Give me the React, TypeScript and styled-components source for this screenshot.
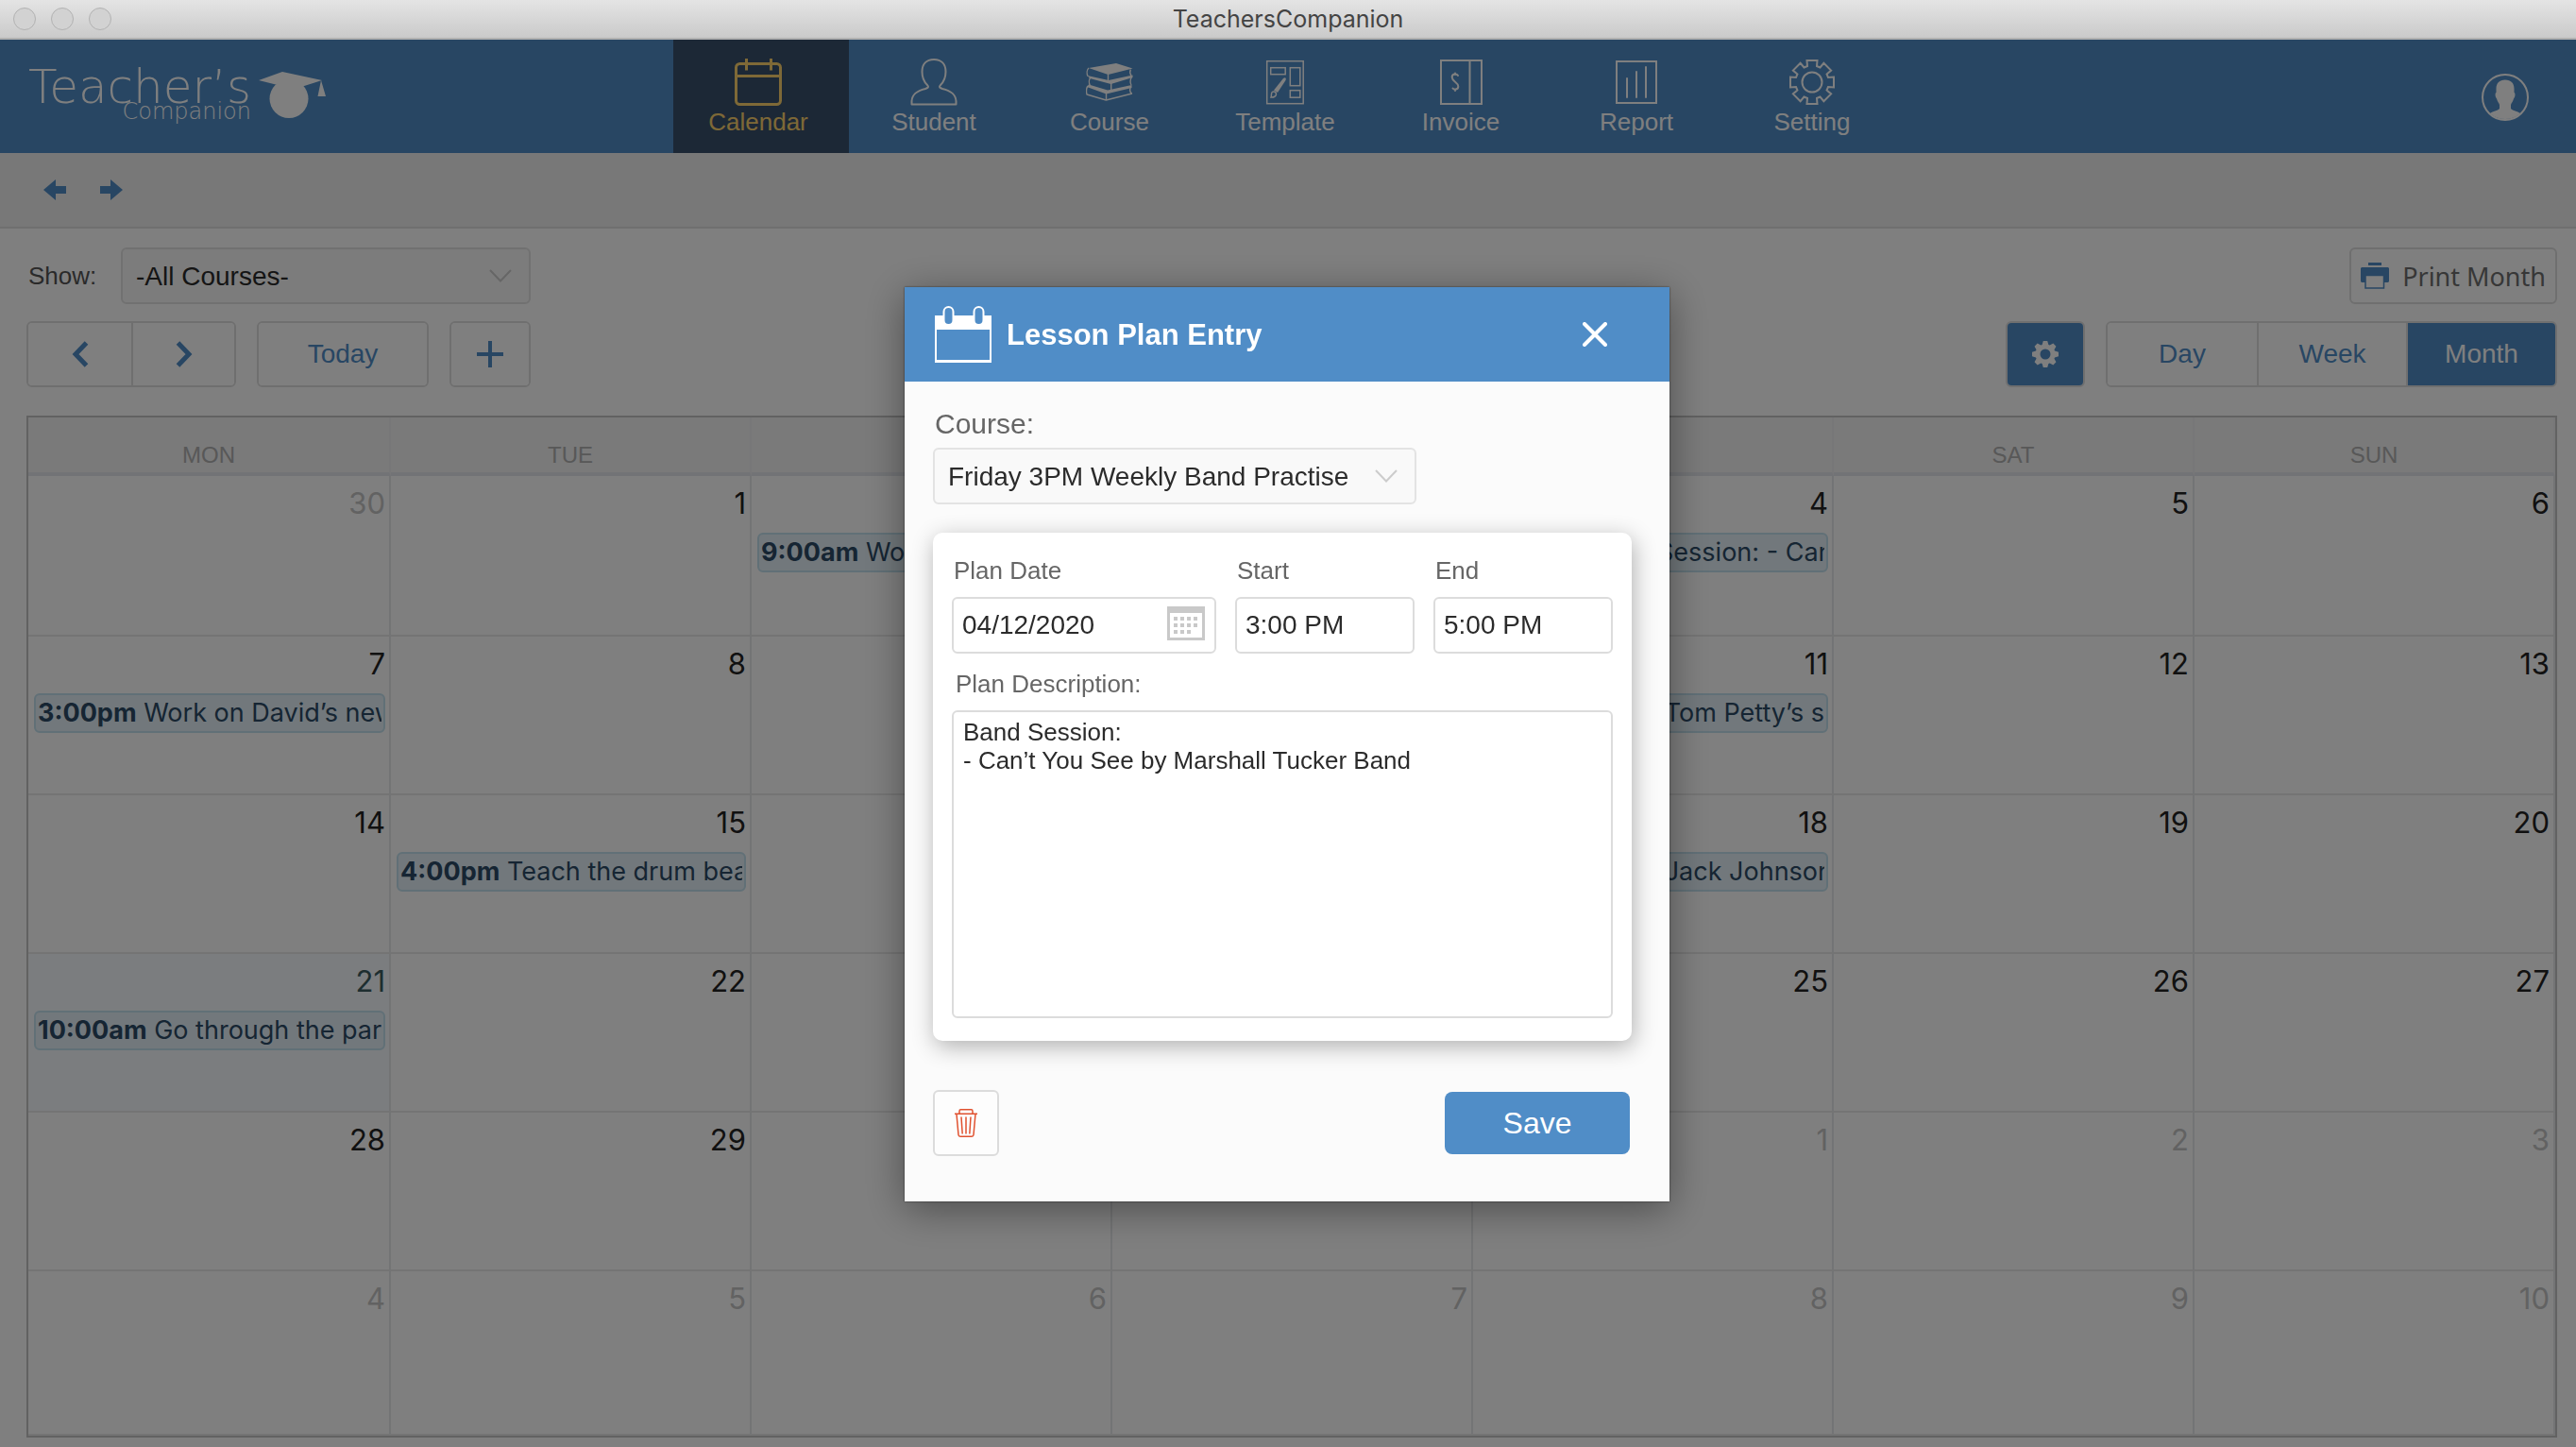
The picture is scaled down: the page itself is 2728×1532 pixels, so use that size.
import React from "react";
import styled, { createGlobalStyle, css } from "styled-components";

const blue = "#508dc7";
const line = "#dedede";
const sans = `"Liberation Sans", Arial, Helvetica, sans-serif`;
const system = `Inter, "Liberation Sans", sans-serif`;

const GlobalStyle = createGlobalStyle`
  *, *::before, *::after { box-sizing: border-box; }
  body { margin: 0; background: #fff; font-family: ${sans}; }
  button, input, select, textarea { font-family: inherit; margin: 0; }
  svg { display: block; flex: none; }
`;

/* ---------- window chrome ---------- */

const TitleBar = styled.div`
  display: grid;
  grid-template-columns: 1fr auto 1fr;
  align-items: center;
  height: 42px;
  padding: 0 14px;
  border-bottom: 2px solid #b0b0b0;
  background: linear-gradient(#e4e4e4, #cacaca);
`;

const WindowButtons = styled.div`
  display: flex;
  gap: 16px;
`;

const WindowButton = styled.button`
  width: 24px;
  height: 24px;
  padding: 0;
  border: 1px solid #b2b2b2;
  border-radius: 50%;
  background: #d2d2d2;
`;

const WindowTitle = styled.div`
  font: 400 25px/40px ${system};
  color: #444;
`;

/* ---------- header ---------- */

const Header = styled.header`
  display: grid;
  grid-template-columns: 1fr auto 1fr;
  height: 120px;
  background: ${blue};
  color: #fff;
`;

const Logo = styled.div`
  display: flex;
  gap: 8px;
  padding: 34px 0 0 30px;
`;

const LogoWords = styled.div`
  display: flex;
  flex-direction: column;
  align-items: flex-end;
  width: 236px;
  font-family: "DejaVu Sans Light", "DejaVu Sans", sans-serif;
  font-weight: 200;
`;

const LogoMain = styled.span`
  font-size: 50px;
  line-height: 32px;
`;

const LogoSub = styled.span`
  font-size: 24px;
  line-height: 20px;
`;

const Nav = styled.nav`
  display: flex;
`;

const NavItem = styled.a<{ $active?: boolean }>`
  display: flex;
  flex-direction: column;
  align-items: center;
  gap: 2px;
  width: 186px;
  padding: 20px 6px 0 0;
  font-size: 26px;
  line-height: 30px;
  text-decoration: none;
  color: ${(p) => (p.$active ? "#fcd26e" : "#fff")};
  background: ${(p) => (p.$active ? "#38506c" : "transparent")};
`;

const Account = styled.button`
  justify-self: end;
  align-self: start;
  margin: 36px 50px 0 0;
  padding: 0;
  border: 0;
  background: none;
  color: inherit;
`;

const HistoryBar = styled.div`
  display: flex;
  align-items: center;
  gap: 36px;
  height: 80px;
  padding: 0 46px;
  border-bottom: 2px solid ${line};
  background: #f0f0f0;
`;

const BareButton = styled.button<{ $light?: boolean }>`
  padding: 0;
  border: 0;
  background: none;
  color: ${(p) => (p.$light ? "#fff" : blue)};
`;

/* ---------- toolbar ---------- */

const Main = styled.main`
  padding: 20px 20px 10px 28px;
`;

const Row = styled.div`
  display: flex;
  align-items: center;
  justify-content: space-between;
`;

const Toolbar = styled(Row)`
  margin: 18px 0 30px;
`;

const Cluster = styled.div`
  display: flex;
  align-items: center;
  gap: 22px;
`;

const ShowLabel = styled.label`
  width: 100px;
  padding-left: 2px;
  font-size: 26px;
  color: #555;
`;

const SelectBox = styled.div<{ $width: number }>`
  display: grid;
  align-items: center;
  width: ${(p) => p.$width}px;
  color: #ccc;

  & > * {
    grid-area: 1 / 1;
  }
  & > svg {
    justify-self: end;
    margin-right: 20px;
    pointer-events: none;
  }
`;

const Select = styled.select`
  appearance: none;
  width: 100%;
  height: 60px;
  padding: 0 50px 0 14px;
  border: 2px solid #e3e3e3;
  border-radius: 6px;
  background: #f9f9f9;
  font-size: 28px;
  color: #2b2b2b;
`;

const PrintButton = styled.button`
  display: flex;
  align-items: center;
  gap: 14px;
  height: 60px;
  padding: 0 10px;
  border: 2px solid ${line};
  border-radius: 6px;
  background: #fff;
  font-family: "Noto Sans", "Open Sans", sans-serif;
  font-size: 27px;
  color: #6e6e6e;
`;

const ButtonGroup = styled.div`
  display: flex;
  overflow: hidden;
  border: 2px solid ${line};
  border-radius: 6px;

  && > * + * {
    border-left: 2px solid ${line};
  }
`;

const ToolButton = styled.button<{ $width: number; $active?: boolean }>`
  display: flex;
  align-items: center;
  justify-content: center;
  width: ${(p) => p.$width}px;
  height: 66px;
  padding: 0;
  border: 0;
  font-size: 28px;
  color: ${(p) => (p.$active ? "#fff" : blue)};
  background: ${(p) => (p.$active ? blue : "#fff")};
`;

/* ---------- month grid ---------- */

const Month = styled.table`
  width: 100%;
  table-layout: fixed;
  border-collapse: separate;
  border-spacing: 0;
  border: 2px solid #c4c4c4;
`;

const WeekDay = styled.th`
  height: 62px;
  padding: 22px 0 0;
  border-right: 2px solid #eeeff1;
  border-bottom: 4px solid #e4e7ec;
  background: #f4f4f4;
  font-size: 24px;
  font-weight: 400;
  line-height: 26px;
  color: #b0b0b0;

  &:first-child {
    width: 384px;
  }
`;

const Week = styled.tr`
  height: 168px;

  &:first-child {
    height: 170px;
  }
  &:last-child {
    height: 174px;
  }
`;

const Day = styled.td<{ $muted?: boolean; $today?: boolean }>`
  padding: 9px 4px 0 6px;
  vertical-align: top;
  border-right: 2px solid #e6e8ea;
  border-bottom: 2px solid #e9e9e9;
  background: ${(p) => (p.$today ? "#f6fafe" : "#fff")};
  color: ${(p) => (p.$muted ? "#c4c4c4" : p.$today ? "#3c5c60" : "#222")};
`;

const DayNumber = styled.div`
  font: 400 31px/40px ${system};
  text-align: right;
`;

const Event = styled.a`
  display: block;
  overflow: hidden;
  height: 42px;
  margin-top: 11px;
  padding: 0 2px;
  border: 2px solid #c2e0ee;
  border-radius: 6px;
  background: #e4f1f8;
  font: 400 27px/38px ${system};
  white-space: nowrap;
  text-decoration: none;
  color: #2c4a66;
`;

const EventText = styled.span`
  display: block;
  overflow: hidden;
`;

/* ---------- dialog ---------- */

const Backdrop = styled.div`
  position: fixed;
  inset: 42px 0 0;
  display: flex;
  align-items: center;
  justify-content: center;
  padding: 2px 2px 0 0;
  background: rgba(0, 0, 0, 0.5);
`;

const Dialog = styled.form`
  width: 810px;
  background: #fbfbfb;
  box-shadow: 0 0 2px rgba(0, 0, 0, 0.6), 0 8px 40px rgba(0, 0, 0, 0.4);
`;

const DialogHeader = styled.div`
  display: flex;
  align-items: center;
  height: 100px;
  padding: 0 66px 0 32px;
  background: ${blue};
  color: #fff;
`;

const DialogTitle = styled.h2`
  flex: 1;
  margin: 2px 0 0 16px;
  font-size: 31px;
  line-height: 36px;
`;

const DialogBody = styled.div`
  padding: 28px 40px 48px 30px;
`;

const CourseLabel = styled.label`
  display: block;
  margin-bottom: 8px;
  padding-left: 2px;
  font-size: 30px;
  line-height: 34px;
  color: #666;
`;

const Card = styled.div`
  margin: 30px 0 52px;
  padding: 24px 20px;
  border-radius: 10px;
  background: #fff;
  box-shadow: 2px 6px 24px rgba(0, 0, 0, 0.3);
`;

const Fields = styled.div`
  display: grid;
  grid-template-columns: 280fr 190fr 190fr;
  gap: 20px;
`;

const FieldLabel = styled.label`
  display: block;
  padding-left: 2px;
  font-size: 26px;
  line-height: 32px;
  color: #666;
`;

const fieldBox = css`
  width: 100%;
  border: 2px solid #dcdcdc;
  border-radius: 6px;
  background: #fff;
  color: #2b2b2b;
`;

const FieldBox = styled.div`
  display: grid;
  align-items: center;
  margin-top: 12px;

  & > * {
    grid-area: 1 / 1;
  }
  & > button {
    justify-self: end;
    margin: 0 12px 4px 0;
  }
`;

const Input = styled.input`
  ${fieldBox}
  height: 60px;
  padding: 0 9px;
  font-size: 28px;
`;

const DescriptionLabel = styled(FieldLabel)`
  margin-top: 16px;
  padding-left: 4px;
`;

const Description = styled.textarea`
  ${fieldBox}
  display: block;
  height: 326px;
  margin-top: 12px;
  padding: 6px 10px;
  resize: none;
  font-size: 26px;
  line-height: 30px;
`;

const Footer = styled(Row)`
  padding-right: 2px;
`;

const DeleteButton = styled.button`
  display: grid;
  place-items: center;
  width: 70px;
  height: 70px;
  padding: 0;
  border: 2px solid #dcdcdc;
  border-radius: 6px;
  background: #fdfdfd;
  color: #e0512f;
`;

const SaveButton = styled.button`
  width: 196px;
  height: 66px;
  border: 0;
  border-radius: 8px;
  background: ${blue};
  font-size: 32px;
  color: #fff;
`;

/* ---------- drawings ---------- */

const gearPath = (inner: number, outer: number, half: number, top: number) => {
  const points: string[] = [];
  for (let k = 0; k < 8; k++) {
    const a = (k * Math.PI) / 4;
    const corners = [
      [-half, -inner],
      [-top, -outer],
      [top, -outer],
      [half, -inner],
    ];
    corners.forEach(([x, y]) => {
      const px = x * Math.cos(a) - y * Math.sin(a);
      const py = x * Math.sin(a) + y * Math.cos(a);
      points.push(`${px.toFixed(2)} ${py.toFixed(2)}`);
    });
  }
  return `M${points.join("L")}Z`;
};

const NavIcon = ({ children }: { children: React.ReactNode }) => (
  <svg width="50" height="50" viewBox="0 0 50 50" fill="none" stroke="currentColor" strokeWidth="2">
    {children}
  </svg>
);

const CalendarIcon = () => (
  <NavIcon>
    <g strokeWidth="3">
      <rect x="1.5" y="5.5" width="47" height="43" rx="4" />
      <path d="M1.5 18.5H48.5M12.5 0V12.5M38.5 0V12.5" />
    </g>
  </NavIcon>
);

const StudentIcon = () => (
  <NavIcon>
    <path
      strokeLinejoin="round"
      d="M25 1C17 1 12.5 6 12.5 14C12.5 21 15 25 18 28C20 30 19 31 16 32C8 34 2 37 1.5 45V48.5H48.5V45C48 37 42 34 34 32C31 31 30 30 32 28C35 25 37.5 21 37.5 14C37.5 6 33 1 25 1Z"
    />
  </NavIcon>
);

const CourseIcon = () => (
  <NavIcon>
    <path fill="currentColor" stroke="none" d="M3 10L32 5L49.5 10.5L23.5 17Z" />
    <g strokeWidth="1.4" strokeLinejoin="round">
      <path d="M3 10C.8 12 .8 16 2 18.7M23.5 16.5V24M47.3 11.5C46.3 14 46.5 16 48 18" />
      <path d="M5 20C3 22 3 26 4.5 29M26.7 26V33M48.5 19.5C46.5 22 46.8 26 48 28" />
      <path d="M2 29C0 32 .2 35 1 38L21.3 44L49 37M21.5 35.5V44M47.5 30C46 33 46 35 48.5 37" />
    </g>
    <path
      fill="currentColor"
      stroke="none"
      d="M1.5 18L24 23L49.5 17.5V20L26.5 27L4 21ZM3 27.5L23 33.5L48.5 28V31L21.5 37.5L1 30Z"
    />
  </NavIcon>
);

const TemplateIcon = () => (
  <NavIcon>
    <g strokeWidth="1.5">
      <rect x="5.7" y="2.7" width="38.5" height="45" />
      <rect x="9.7" y="9.7" width="15.5" height="7" />
      <rect x="30.3" y="9.7" width="10.5" height="19" />
      <rect x="30.3" y="33.7" width="10.5" height="7.5" />
      <path d="M10 41C11 39 9.5 37 11.5 35.3C13 34.3 15.5 35.5 15.5 37.5C15.5 40 13 41.2 10 41Z" />
    </g>
    <path fill="currentColor" stroke="none" d="M23 21C25 19.5 26.5 20.8 25.5 23L17 36L13 33.5Z" />
  </NavIcon>
);

const InvoiceIcon = () => (
  <NavIcon>
    <rect x="4" y="2" width="43" height="46" />
    <path d="M34.5 2V48" />
    <path
      strokeLinecap="round"
      d="M22 18C20.5 15.5 15.5 16 15.7 20C16 24.5 22.3 25 22.3 29.5C22.3 33 18 33.5 16.5 31.5M19 15.5V17M19 32.5V34"
    />
  </NavIcon>
);

const ReportIcon = () => (
  <NavIcon>
    <rect x="4" y="3" width="42" height="44" />
    <path strokeLinecap="round" d="M15 21V41M25 14V41M35 9V41" />
  </NavIcon>
);

const SettingIcon = () => (
  <NavIcon>
    <g transform="translate(25 25)">
      <path d={gearPath(17, 23, 5, 5.5)} />
      <circle r="10.5" />
    </g>
  </NavIcon>
);

const GradIcon = () => (
  <svg width="72" height="50" viewBox="0 0 72 50" fill="currentColor">
    <circle cx="32" cy="28.5" r="20.5" />
    <path d="M0 9L25 0L67 9L45 16C37 10 26 10 18 13.5ZM66 9L71 26H62.5Z" />
  </svg>
);

const AccountIcon = () => (
  <svg width="50" height="50" viewBox="0 0 50 50">
    <circle cx="25" cy="25" r="24" fill="none" stroke="currentColor" strokeWidth="2" />
    <path
      fill="currentColor"
      d="M25 6.5C19 6.5 15.5 10 15.5 16V20C14 20.5 14.3 25 16 26.5C16.7 29.5 18.5 31 19 33V37C17 39.5 12 39.5 9 42A24 24 0 0 0 41 42C38 39.5 33 39.5 31 37V33C31.5 31 33.3 29.5 34 26.5C35.7 25 36 20.5 34.5 20V16C34.5 10 31 6.5 25 6.5Z"
    />
  </svg>
);

const ArrowIcon = ({ right }: { right?: boolean }) => (
  <svg width="24" height="22" viewBox="0 0 24 22" fill="currentColor">
    <path d={right ? "M24 11L11 0V7H0V15H11V22Z" : "M0 11L13 0V7H24V15H13V22Z"} />
  </svg>
);

const ChevronDown = () => (
  <svg width="24" height="14" viewBox="0 0 24 14" fill="none" stroke="currentColor" strokeWidth="2">
    <path d="M1 1L12 12.5L23 1" />
  </svg>
);

const SideChevron = ({ right }: { right?: boolean }) => (
  <svg width="18" height="28" viewBox="0 0 18 28" fill="none" stroke="currentColor" strokeWidth="5">
    <path d={right ? "M2.5 2L14 14L2.5 26" : "M15.5 2L4 14L15.5 26"} />
  </svg>
);

const PlusIcon = () => (
  <svg width="28" height="28" viewBox="0 0 28 28" stroke="currentColor" strokeWidth="4">
    <path d="M14 0V28M0 14H28" />
  </svg>
);

const SolidGear = () => (
  <svg width="28" height="28" viewBox="-14 -14 28 28" fill="currentColor" fillRule="evenodd">
    <path d={`${gearPath(10, 14, 3.4, 2.2)}M5.5 0A5.5 5.5 0 1 0 -5.5 0A5.5 5.5 0 1 0 5.5 0Z`} />
  </svg>
);

const PrinterIcon = () => (
  <svg width="30" height="28" viewBox="0 0 30 28" fill={blue}>
    <rect x="8" width="14" height="3" />
    <path d="M1 5H29L30 6V20L29 21H1L0 20V6Z" />
    <rect x="5" y="13.5" width="19.5" height="13.5" fill="#fff" stroke={blue} strokeWidth="1.5" />
  </svg>
);

const LessonIcon = () => (
  <svg width="60" height="60" viewBox="0 0 60 60">
    <path fill="#fff" d="M0 10H60V25H0Z" />
    <path fill="none" stroke="#fff" strokeWidth="2" d="M1 10V59H59V10M0 58H60" />
    <g fill={blue} stroke="#fff" strokeWidth="2">
      <rect x="9.5" y="1" width="10" height="19" rx="5" />
      <rect x="41.5" y="1" width="10" height="19" rx="5" />
    </g>
  </svg>
);

const CloseIcon = () => (
  <svg width="26" height="26" viewBox="0 0 26 26" stroke="currentColor" strokeWidth="4" strokeLinecap="round">
    <path d="M2 2L24 24M24 2L2 24" />
  </svg>
);

const DateIcon = () => (
  <svg width="40" height="36" viewBox="0 0 40 36" fill="#c9c9c9">
    <path fillRule="evenodd" d="M0 0H40V36H0ZM3 7V33H37V7Z" />
    {[11, 18, 25].map((y, r) =>
      [7, 14, 21, 28].slice(0, r === 2 ? 3 : 4).map((x) => <rect key={`${x}-${y}`} x={x} y={y} width="4" height="4" />)
    )}
  </svg>
);

const TrashIcon = () => (
  <svg width="24" height="30" viewBox="0 0 24 30" fill="none" stroke="currentColor" strokeWidth="1.5">
    <path d="M0 5.2H24M5 5V2.5C5 1.3 5.7.8 6.5.8H17.5C18.3.8 19 1.3 19 2.5V5" />
    <path d="M2 5.5L4 27.5C4.1 28.7 4.8 29.2 6 29.2H18C19.2 29.2 19.9 28.7 20 27.5L22 5.5" />
    <path d="M7 8.5L8.2 26.5M12 8.5V26.5M17 8.5L15.8 26.5" />
  </svg>
);

/* ---------- data ---------- */

const navItems = [
  { label: "Calendar", icon: <CalendarIcon />, active: true },
  { label: "Student", icon: <StudentIcon /> },
  { label: "Course", icon: <CourseIcon /> },
  { label: "Template", icon: <TemplateIcon /> },
  { label: "Invoice", icon: <InvoiceIcon /> },
  { label: "Report", icon: <ReportIcon /> },
  { label: "Setting", icon: <SettingIcon /> },
];

const weekDays = ["MON", "TUE", "WED", "THU", "FRI", "SAT", "SUN"];

const events: Record<number, { time: string; text: string }> = {
  2: { time: "9:00am", text: "Work on scales" },
  4: { time: "3:00pm", text: "Band Session: - Can’t You See by Marshall Tucker Band" },
  7: { time: "3:00pm", text: "Work on David’s new song" },
  11: { time: "3:00pm", text: "Learn Tom Petty’s song" },
  15: { time: "4:00pm", text: "Teach the drum beat" },
  18: { time: "3:00pm", text: "Learn Jack Johnson" },
  21: { time: "10:00am", text: "Go through the parts" },
};

// December 2020, shown with the last day of November and the first days of January.
const weeks = Array.from({ length: 6 }, (_, w) =>
  Array.from({ length: 7 }, (_, d) => {
    const n = w * 7 + d;
    if (n === 0) return { date: 30, inMonth: false };
    return n > 31 ? { date: n - 31, inMonth: false } : { date: n, inMonth: true };
  })
);

export default function App() {
  return (
    <>
      <GlobalStyle />
      <TitleBar>
        <WindowButtons>
          <WindowButton aria-label="Close window" />
          <WindowButton aria-label="Minimise window" />
          <WindowButton aria-label="Zoom window" />
        </WindowButtons>
        <WindowTitle>TeachersCompanion</WindowTitle>
      </TitleBar>

      <Header>
        <Logo>
          <LogoWords>
            <LogoMain>Teacher’s</LogoMain>
            <LogoSub>Companion</LogoSub>
          </LogoWords>
          <GradIcon />
        </Logo>
        <Nav>
          {navItems.map((item) => (
            <NavItem key={item.label} href="#" $active={item.active}>
              {item.icon}
              {item.label}
            </NavItem>
          ))}
        </Nav>
        <Account aria-label="Account">
          <AccountIcon />
        </Account>
      </Header>

      <HistoryBar>
        <BareButton aria-label="Back">
          <ArrowIcon />
        </BareButton>
        <BareButton aria-label="Forward">
          <ArrowIcon right />
        </BareButton>
      </HistoryBar>

      <Main>
        <Row>
          <Row>
            <ShowLabel htmlFor="show">Show:</ShowLabel>
            <SelectBox $width={434}>
              <Select id="show">
                <option>-All Courses-</option>
              </Select>
              <ChevronDown />
            </SelectBox>
          </Row>
          <PrintButton>
            <PrinterIcon />
            Print Month
          </PrintButton>
        </Row>

        <Toolbar>
          <Cluster>
            <ButtonGroup>
              <ToolButton $width={109} aria-label="Previous month">
                <SideChevron />
              </ToolButton>
              <ToolButton $width={109} aria-label="Next month">
                <SideChevron right />
              </ToolButton>
            </ButtonGroup>
            <ButtonGroup>
              <ToolButton $width={178}>Today</ToolButton>
            </ButtonGroup>
            <ButtonGroup>
              <ToolButton $width={82} aria-label="Add">
                <PlusIcon />
              </ToolButton>
            </ButtonGroup>
          </Cluster>
          <Cluster>
            <ButtonGroup>
              <ToolButton $width={80} $active aria-label="Calendar settings">
                <SolidGear />
              </ToolButton>
            </ButtonGroup>
            <ButtonGroup>
              <ToolButton $width={158}>Day</ToolButton>
              <ToolButton $width={158}>Week</ToolButton>
              <ToolButton $width={158} $active>
                Month
              </ToolButton>
            </ButtonGroup>
          </Cluster>
        </Toolbar>

        <Month>
          <thead>
            <tr>
              {weekDays.map((d) => (
                <WeekDay key={d}>{d}</WeekDay>
              ))}
            </tr>
          </thead>
          <tbody>
            {weeks.map((week, w) => (
              <Week key={w}>
                {week.map(({ date, inMonth }) => {
                  const event = inMonth ? events[date] : undefined;
                  return (
                    <Day key={date} $muted={!inMonth} $today={inMonth && date === 21}>
                      <DayNumber>{date}</DayNumber>
                      {event && (
                        <Event href="#">
                          <EventText>
                            <b>{event.time}</b> {event.text}
                          </EventText>
                        </Event>
                      )}
                    </Day>
                  );
                })}
              </Week>
            ))}
          </tbody>
        </Month>
      </Main>

      <Backdrop>
        <Dialog role="dialog" aria-labelledby="dialog-title" onSubmit={(e) => e.preventDefault()}>
          <DialogHeader>
            <LessonIcon />
            <DialogTitle id="dialog-title">Lesson Plan Entry</DialogTitle>
            <BareButton type="button" $light aria-label="Close">
              <CloseIcon />
            </BareButton>
          </DialogHeader>
          <DialogBody>
            <CourseLabel htmlFor="course">Course:</CourseLabel>
            <SelectBox $width={512}>
              <Select id="course">
                <option>Friday 3PM Weekly Band Practise</option>
              </Select>
              <ChevronDown />
            </SelectBox>
            <Card>
              <Fields>
                <div>
                  <FieldLabel htmlFor="date">Plan Date</FieldLabel>
                  <FieldBox>
                    <Input id="date" defaultValue="04/12/2020" />
                    <BareButton type="button" aria-label="Choose date">
                      <DateIcon />
                    </BareButton>
                  </FieldBox>
                </div>
                <div>
                  <FieldLabel htmlFor="start">Start</FieldLabel>
                  <FieldBox>
                    <Input id="start" defaultValue="3:00 PM" />
                  </FieldBox>
                </div>
                <div>
                  <FieldLabel htmlFor="end">End</FieldLabel>
                  <FieldBox>
                    <Input id="end" defaultValue="5:00 PM" />
                  </FieldBox>
                </div>
              </Fields>
              <DescriptionLabel htmlFor="description">Plan Description:</DescriptionLabel>
              <Description
                id="description"
                defaultValue={"Band Session:\n- Can’t You See by Marshall Tucker Band"}
              />
            </Card>
            <Footer>
              <DeleteButton type="button" aria-label="Delete">
                <TrashIcon />
              </DeleteButton>
              <SaveButton type="submit">Save</SaveButton>
            </Footer>
          </DialogBody>
        </Dialog>
      </Backdrop>
    </>
  );
}
